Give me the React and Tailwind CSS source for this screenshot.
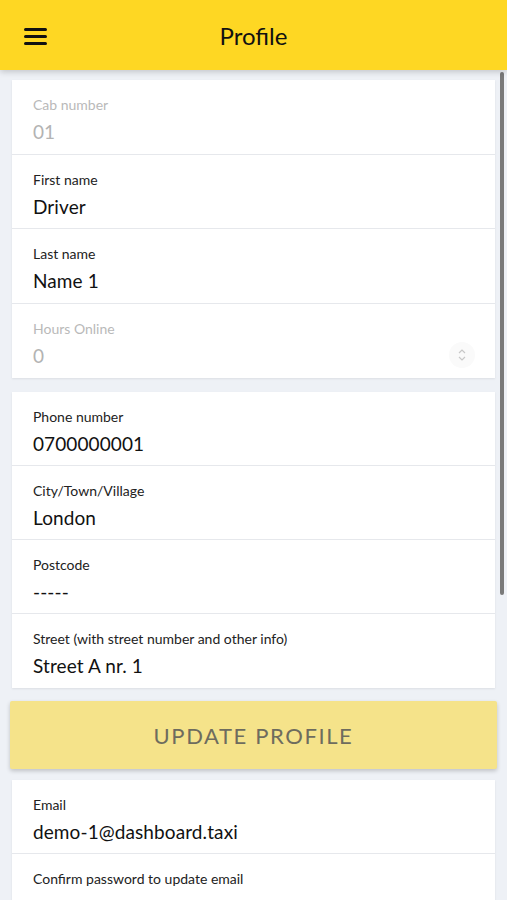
import React from "react";

function Row({ label, value, disabled, last, stepper, h = "h-[74.5px]" }) {
  return (
    <div className={"relative pl-[21px] pr-4 " + h + " " + (last ? "" : "border-b border-[#e6e8ec]")}>
      <div className={"pt-[16px] text-[14px] leading-[18px] " + (disabled ? "text-[#b9b9b9]" : "text-[#222]")}>{label}</div>
      <div className={"mt-[6px] text-[19px] leading-[24px] tracking-[0.1px] " + (disabled ? "text-[#b3b3b3]" : "text-[#111]")}>{value}</div>
      {stepper && (
        <div className="absolute right-[20px] top-[38px] flex h-[26px] w-[26px] items-center justify-center rounded-full bg-[#fafafa]">
          <svg width="10" height="16" viewBox="0 0 10 16" fill="none" stroke="#c8c8c8" strokeWidth="1.2">
            <path d="M2 6 L5 3 L8 6" />
            <path d="M2 10 L5 13 L8 10" />
          </svg>
        </div>
      )}
    </div>
  );
}

export default function App() {
  return (
    <div className="relative h-[900px] w-[507px] overflow-hidden bg-[#eef1f6]" style={{ fontFamily: "Lato, 'Noto Sans', sans-serif" }}>
      <header className="relative z-10 flex h-[70px] items-center bg-[#fed723] shadow-[0_2px_6px_rgba(0,0,0,0.18)]">
        <div className="absolute left-[24px] top-[28px] flex flex-col gap-[4px]">
          <div className="h-[3px] w-[23px] rounded-sm bg-[#111]" />
          <div className="h-[3px] w-[23px] rounded-sm bg-[#111]" />
          <div className="h-[3px] w-[23px] rounded-sm bg-[#111]" />
        </div>
        <div className="w-full text-center text-[24px] leading-[30px] text-[#111] pt-[2px]">Profile</div>
      </header>

      <div className="absolute right-[3px] top-[72px] h-[523px] w-[4px] rounded-full bg-[#7a7a7a]" />

      <main className="flex flex-col pt-[10px] pl-[12px] pr-[12px]">
        <section className="bg-white shadow-[0_1px_2px_rgba(0,0,0,0.08)]">
          <Row label="Cab number" value="01" disabled />
          <Row label="First name" value="Driver" />
          <Row label="Last name" value="Name 1" />
          <Row label="Hours Online" value="0" disabled last stepper />
        </section>

        <section className="mt-[14px] bg-white shadow-[0_1px_2px_rgba(0,0,0,0.08)]">
          <Row h="h-[74px]" label="Phone number" value="0700000001" />
          <Row h="h-[74px]" label="City/Town/Village" value="London" />
          <Row h="h-[74px]" label="Postcode" value="-----" />
          <Row h="h-[74px]" label="Street (with street number and other info)" value="Street A nr. 1" last />
        </section>

        <button className="-mx-[2px] mt-[13px] flex h-[68px] items-center justify-center rounded-[2px] bg-[#f5e38a] pt-[1px] text-[22px] tracking-[1.6px] text-[#6e6c5e] shadow-[0_2px_4px_rgba(0,0,0,0.2)]">
          UPDATE PROFILE
        </button>

        <section className="mt-[11px] bg-white shadow-[0_1px_2px_rgba(0,0,0,0.08)]">
          <Row h="h-[74px]" label="Email" value="demo-1@dashboard.taxi" />
          <Row h="h-[74px]" label="Confirm password to update email" value="" last />
        </section>
      </main>
    </div>
  );
}
